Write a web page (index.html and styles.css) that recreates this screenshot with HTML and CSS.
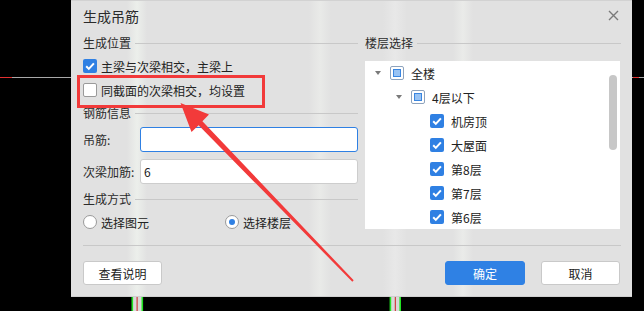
FILE: index.html
```html
<!DOCTYPE html>
<html lang="zh">
<head>
<meta charset="utf-8">
<title>生成吊筋</title>
<link rel="stylesheet" href="styles.css">
</head>
<body>
<svg class="backdrop" width="644" height="311" viewBox="0 0 644 311">
  <rect x="0" y="77" width="71" height="1" fill="#a8a8a8"/>
  <rect x="0" y="77" width="12" height="1" fill="#e23030"/>
  <rect x="632" y="77" width="12" height="1" fill="#a8a8a8"/>
  <rect x="633" y="77" width="6" height="1" fill="#e23030"/>
  <rect x="133" y="297" width="9" height="14" fill="#d8d8d8"/>
  <rect x="131.5" y="297" width="1.6" height="14" fill="#22e322"/>
  <rect x="141.5" y="297" width="1.6" height="14" fill="#22e322"/>
  <rect x="136.6" y="297" width="1" height="14" fill="#d02020"/>
  <rect x="391" y="297" width="9" height="14" fill="#d8d8d8"/>
  <rect x="389.6" y="297" width="1.6" height="14" fill="#22e322"/>
  <rect x="399.4" y="297" width="1.6" height="14" fill="#22e322"/>
  <rect x="394.8" y="297" width="1" height="14" fill="#d02020"/>
</svg>

<div class="dialog">
  <div class="header">
    <span class="title">生成吊筋</span>
    <svg class="close" width="11" height="11" viewBox="0 0 11 11"><path d="M1 1L10 10M10 1L1 10" stroke="#7a7a7a" stroke-width="1.4"/></svg>
  </div>

  <div class="body">
    <div class="col-left">
      <div class="legend">生成位置</div>
      <label class="check-row first">
        <span class="cb checked"><svg width="14" height="14" viewBox="0 0 14 14"><path d="M3.2 7.3L5.8 9.9L10.9 4.3" fill="none" stroke="#fff" stroke-width="2"/></svg></span>
        <span>主梁与次梁相交，主梁上</span>
      </label>
      <label class="check-row">
        <span class="cb"></span>
        <span>同截面的次梁相交，均设置</span>
      </label>

      <div class="legend sec">钢筋信息</div>
      <div class="field first-field">
        <span class="field-label">吊筋:</span>
        <span class="input focused"></span>
      </div>
      <div class="field">
        <span class="field-label">次梁加筋:</span>
        <span class="input">6</span>
      </div>

      <div class="legend sec2">生成方式</div>
      <div class="radios">
        <label class="radio-item wide"><span class="radio"></span><span>选择图元</span></label>
        <label class="radio-item"><span class="radio on"></span><span>选择楼层</span></label>
      </div>
    </div>

    <div class="col-right">
      <div class="legend">楼层选择</div>
      <div class="tree">
        <ul class="tree-list">
          <li class="node lv0"><span class="toggle"></span><span class="cb partial"><i></i></span><span>全楼</span></li>
          <li class="node lv1"><span class="toggle"></span><span class="cb partial"><i></i></span><span>4层以下</span></li>
          <li class="node lv2"><span class="toggle empty"></span><span class="cb checked"><svg width="14" height="14" viewBox="0 0 14 14"><path d="M3.2 7.3L5.8 9.9L10.9 4.3" fill="none" stroke="#fff" stroke-width="2"/></svg></span><span>机房顶</span></li>
          <li class="node lv2"><span class="toggle empty"></span><span class="cb checked"><svg width="14" height="14" viewBox="0 0 14 14"><path d="M3.2 7.3L5.8 9.9L10.9 4.3" fill="none" stroke="#fff" stroke-width="2"/></svg></span><span>大屋面</span></li>
          <li class="node lv2"><span class="toggle empty"></span><span class="cb checked"><svg width="14" height="14" viewBox="0 0 14 14"><path d="M3.2 7.3L5.8 9.9L10.9 4.3" fill="none" stroke="#fff" stroke-width="2"/></svg></span><span>第8层</span></li>
          <li class="node lv2"><span class="toggle empty"></span><span class="cb checked"><svg width="14" height="14" viewBox="0 0 14 14"><path d="M3.2 7.3L5.8 9.9L10.9 4.3" fill="none" stroke="#fff" stroke-width="2"/></svg></span><span>第7层</span></li>
          <li class="node lv2"><span class="toggle empty"></span><span class="cb checked"><svg width="14" height="14" viewBox="0 0 14 14"><path d="M3.2 7.3L5.8 9.9L10.9 4.3" fill="none" stroke="#fff" stroke-width="2"/></svg></span><span>第6层</span></li>
        </ul>
        <div class="scroll-track"><div class="scroll-thumb"></div></div>
      </div>
    </div>
  </div>

  <div class="footer">
    <button class="btn">查看说明</button>
    <div class="footer-right">
      <button class="btn primary">确定</button>
      <button class="btn">取消</button>
    </div>
  </div>
</div>

<svg class="annotation" width="644" height="311" viewBox="0 0 644 311">
  <rect x="78.5" y="76.5" width="185" height="30" fill="none" stroke="#f23a3a" stroke-width="3"/>
  <polygon fill="#f23a3a" points="180.5,103 209,114.5 202.4,121.2 353.7,280.3 352.3,281.7 198.6,125.2 191.5,132"/>
</svg>
</body>
</html>
```

FILE: styles.css
```css
* { box-sizing: border-box; }

html, body {
  margin: 0;
  padding: 0;
}

body {
  position: relative;
  width: 644px;
  height: 311px;
  background: #000;
  overflow: hidden;
  font-family: "Noto Sans CJK SC", "Microsoft YaHei", "Noto Sans", sans-serif;
  font-size: 12px;
  color: #222;
}

.backdrop {
  position: absolute;
  left: 0;
  top: 0;
}

.annotation {
  position: absolute;
  left: 0;
  top: 0;
  pointer-events: none;
}

.dialog {
  position: relative;
  margin-left: 71px;
  width: 561px;
  height: 297px;
  padding: 0 11px 0 12px;
  background-color: #e1e1e1;
  background-image: linear-gradient(90deg,
    #e1e1e1 0px, #e1e1e1 56px, #ecefeb 66px, #e1e1e1 76px,
    #e1e1e1 238px, #e9eae8 249px, #e1e1e1 260px,
    #e1e1e1 312px, #e8e8e8 324px, #e1e1e1 336px,
    #e1e1e1 382px, #eaebe9 392px, #e1e1e1 402px);
  border-top: 1px solid #d2d2d2;
  border-bottom: 1px solid #cfcfcf;
}

.header {
  height: 29px;
  display: flex;
  align-items: center;
  justify-content: space-between;
}

.title {
  font-size: 14px;
  color: #2b2b2b;
}

.close {
  margin-right: 2px;
  display: block;
}

.body {
  display: grid;
  grid-template-columns: 275px 256px;
  column-gap: 7px;
  height: 215px;
  padding-top: 6px;
}

.legend {
  display: flex;
  align-items: center;
  gap: 4px;
  height: 14px;
  line-height: 14px;
  color: #2b2b2b;
}

.legend::after {
  content: "";
  flex: 1;
  height: 1px;
  background: #c8c8c8;
}

.check-row {
  display: flex;
  align-items: center;
  gap: 4px;
  height: 20px;
  margin-top: 4px;
}

.check-row.first { margin-top: 6px; }

.cb {
  width: 14px;
  height: 14px;
  flex: none;
  border: 1px solid #9a9a9a;
  border-radius: 2px;
  background: #fff;
  display: flex;
  align-items: center;
  justify-content: center;
}

.cb.checked {
  background: #2f80e3;
  border: none;
}

.cb svg { display: block; }

.cb.partial {
  border-color: #8ea3bd;
  padding: 2px;
}

.cb.partial i {
  display: block;
  width: 100%;
  height: 100%;
  background: #98c3f4;
  border: 1px solid #3a86e0;
}

.legend.sec { margin-top: 6px; }
.legend.sec2 { margin-top: 8px; }

.field {
  display: flex;
  align-items: center;
  height: 25px;
  margin-top: 7px;
}

.field-label {
  width: 57px;
  flex: none;
  color: #2b2b2b;
}

.input {
  flex: 1;
  height: 25px;
  background: #fff;
  border: 1px solid #cdcdcd;
  border-radius: 3px;
  padding-left: 3px;
  line-height: 23px;
  color: #222;
}

.input.focused { border-color: #2f80e3; }

.radios {
  display: flex;
  align-items: center;
  height: 20px;
  margin-top: 6px;
}

.radio-item {
  display: flex;
  align-items: center;
  gap: 4px;
}

.radio-item.wide { width: 142px; }

.radio {
  width: 14px;
  height: 14px;
  border: 1px solid #9a9a9a;
  border-radius: 50%;
  background: #fff;
  display: flex;
  align-items: center;
  justify-content: center;
}

.radio.on::after {
  content: "";
  width: 6px;
  height: 6px;
  border-radius: 50%;
  background: #2f80e3;
}

.tree {
  margin-top: 11px;
  height: 168px;
  width: 255px;
  background: #fff;
  display: flex;
}

.tree-list {
  list-style: none;
  margin: 0;
  padding: 0;
  flex: 1;
}

.node {
  display: flex;
  align-items: center;
  height: 24px;
  color: #222;
}

.node.lv0 { padding-left: 5px; }
.node.lv1 { padding-left: 26px; }
.node.lv2 { padding-left: 45px; }

.toggle {
  width: 16px;
  height: 10px;
  flex: none;
  margin-right: 4px;
  position: relative;
}

.toggle::after {
  content: "";
  position: absolute;
  left: 5px;
  top: 3px;
  border-left: 3.5px solid transparent;
  border-right: 3.5px solid transparent;
  border-top: 4px solid #7a7a7a;
}

.toggle.empty::after { display: none; }

.node .cb { margin-right: 7px; }

.scroll-track {
  width: 8px;
  margin-right: 3px;
  padding-top: 14px;
  flex: none;
}

.scroll-thumb {
  height: 75px;
  border-radius: 4px;
  background: #c7c7c7;
}

.footer {
  border-top: 1px solid #c8c8c8;
  padding-top: 15px;
  display: flex;
  justify-content: space-between;
}

.footer-right {
  display: flex;
  gap: 16px;
  margin-right: 1px;
}

.btn {
  font-family: inherit;
  font-size: 12px;
  width: 79px;
  height: 24px;
  padding: 0;
  background: #fff;
  border: 1px solid #c9c9c9;
  border-radius: 3px;
  color: #222;
}

.btn.primary {
  width: 80px;
  background: #2f81e4;
  border-color: #2f81e4;
  color: #fff;
}
```
